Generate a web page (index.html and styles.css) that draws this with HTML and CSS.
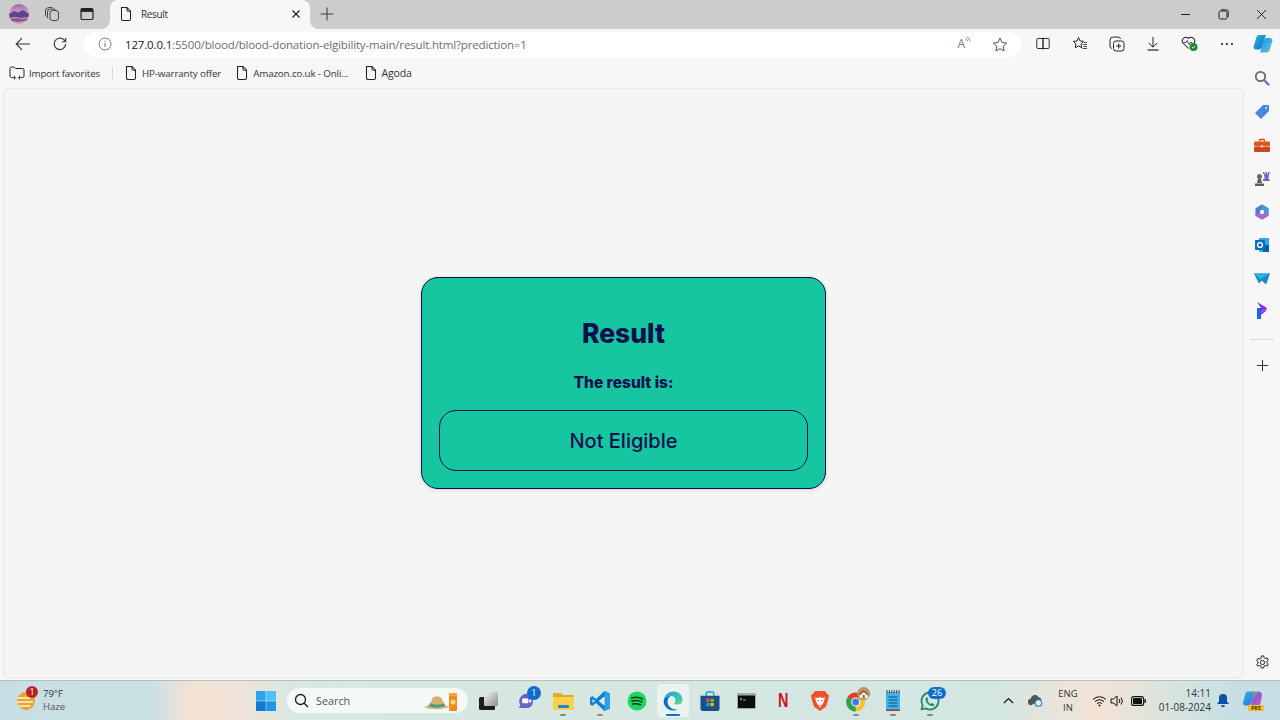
FILE: index.html
```html
<!DOCTYPE html>
<html lang="en">
<head>
<meta charset="utf-8">
<title>Result</title>
<link rel="stylesheet" href="styles.css">
</head>
<body>
<svg class="defs" width="0" height="0" aria-hidden="true">
  <symbol id="page" viewBox="0 0 14 16"><path d="M2.500 1.500h5.600L11.500 5v8a1.500 1.500 0 0 1-1.500 1.500H4A1.500 1.500 0 0 1 2.500 13z M8 1.500v2.500a1.200 1.200 0 0 0 1.200 1.200h2.300" fill="none" stroke="#222" stroke-width="1.050" stroke-linejoin="round"/></symbol>
</svg>
<div class="browser">
  <header class="tabstrip">
    <button class="ib avatar-btn"><svg width="20" height="20" viewBox="0 0 20 20"><defs><linearGradient id="av" x1="0" y1="0" x2="0" y2="1"><stop offset="0" stop-color="#8b72b8"/><stop offset=".35" stop-color="#d08fc0"/><stop offset=".5" stop-color="#e8a2b0"/><stop offset="1" stop-color="#e98aa0"/></linearGradient><clipPath id="avc"><circle cx="10" cy="10" r="10"/></clipPath></defs><g clip-path="url(#avc)"><rect width="20" height="20" fill="url(#av)"/><path d="M0 10l5-3 4 1.500L14 6l6 4v3l-8 1-6-1-6 1z" fill="#5c4590"/><path d="M0 15l7-1 6 1 7-1v2l-10 2-10-1z" fill="#7e5aa6"/></g></svg></button>
    <button class="ib ws"><svg width="16" height="16" viewBox="0 0 16 16" fill="none" stroke="#444" stroke-width="1"><rect x="6" y="4.500" width="8.500" height="10" rx="2.500"/><path d="M4 12.500A2 2 0 0 1 3.500 11V6a3 3 0 0 1 3-3h3.500a2 2 0 0 1 1.500.7"/><path d="M2 10.500A2 2 0 0 1 1.500 9V5a3.500 3.500 0 0 1 3.500-3.500h3.500"/></svg></button>
    <button class="ib ta"><svg width="14" height="14" viewBox="0 0 14 14"><rect x="1" y="1.500" width="12" height="11" rx="1.600" fill="none" stroke="#222" stroke-width="1.200"/><rect x="1" y="1.500" width="12" height="3.400" fill="#222"/></svg></button>
    <div class="tab">
      <svg class="tab-ico" width="14" height="16"><use href="#page"/></svg>
      <span class="tab-title">Result</span>
      <svg class="tab-x" width="10" height="10" viewBox="0 0 10 10"><path d="M1.500 1.500l7 7M8.500 1.500l-7 7" stroke="#222" stroke-width="1.200"/></svg>
    </div>
    <button class="ib newtab"><svg width="14" height="14" viewBox="0 0 14 14"><path d="M7 .5v13M.5 7h13" stroke="#444" stroke-width="1.100"/></svg></button>
    <div class="winctl">
      <button class="wb"><svg width="11" height="11" viewBox="0 0 11 11"><path d="M1 5.500h9" stroke="#222" stroke-width="1"/></svg></button>
      <button class="wb"><svg width="11" height="11" viewBox="0 0 11 11" fill="none" stroke="#222" stroke-width="1"><rect x="1" y="2" width="8" height="8" rx="1.500"/><path d="M3 .8h5.500A1.800 1.800 0 0 1 10.200 2.600V8"/></svg></button>
      <button class="wb"><svg width="11" height="11" viewBox="0 0 11 11"><path d="M1 1l9 9M10 1l-9 9" stroke="#222" stroke-width="1"/></svg></button>
    </div>
  </header>

  <nav class="toolbar">
    <button class="tb tb-back"><svg width="16" height="14" viewBox="0 0 16 14"><path d="M15 7H1.500M7 1.200L1.200 7 7 12.800" fill="none" stroke="#333" stroke-width="1.100"/></svg></button>
    <button class="tb tb-ref"><svg width="14" height="14" viewBox="0 0 14 14" fill="none" stroke="#333" stroke-width="1.100"><path d="M12.600 7A5.700 5.700 0 1 1 10.800 2.700L12.600 4.500"/><path d="M12.700 1v3.700H9"/></svg></button>
    <div class="address">
      <svg class="addr-i" width="14" height="14" viewBox="0 0 14 14"><circle cx="7" cy="7" r="6" fill="none" stroke="#777" stroke-width="1"/><path d="M7 6v4M7 3.700v1.100" stroke="#777" stroke-width="1.100"/></svg>
      <span class="url"><span class="host">127.0.0.1</span>:5500/blood/blood-donation-elgibility-main/result.html?prediction=1</span>
      <span class="read"><span class="read-a">A</span><svg width="6" height="6" viewBox="0 0 6 6"><path d="M.5 2.500a3 3 0 0 1 2 2.800M2 .8a5 5 0 0 1 3 4.400" fill="none" stroke="#777" stroke-width=".9"/></svg></span>
      <svg class="addr-s" width="16" height="15" viewBox="0 0 16 15"><path d="M8 1.200l2 4.300 4.600.6-3.400 3.200.9 4.700L8 11.700 3.900 14l.9-4.700L1.400 6.100 6 5.500z" fill="none" stroke="#555" stroke-width="1" stroke-linejoin="round"/></svg>
    </div>
    <div class="actions">
      <button class="ab"><svg width="14" height="13" viewBox="0 0 14 13" fill="none" stroke="#333" stroke-width="1"><path d="M7 1.500h5.200a1 1 0 0 1 1 1v8a1 1 0 0 1-1 1H7z"/><path d="M7 1.500H1.800a1 1 0 0 0-1 1v8a1 1 0 0 0 1 1H7M7 .5v12"/></svg></button>
      <button class="ab"><svg width="16" height="15" viewBox="0 0 16 15" fill="none" stroke="#222" stroke-width="1"><path d="M6.500 1.500l1.600 3.500 3.600.4-2.700 2.600.7 3.800-3.200-1.900-3.200 1.900.7-3.800L1.300 5.400l3.600-.4z" stroke-linejoin="round"/><path d="M11 8.500h4M11.500 10.500h3.500M10.500 12.500h4.500M12 6.500h3" stroke-width=".8"/></svg></button>
      <button class="ab"><svg width="16" height="16" viewBox="0 0 16 16" fill="none" stroke="#222" stroke-width="1"><rect x="4.500" y="5" width="10.500" height="10" rx="2.500"/><path d="M9.750 7.500v5M7.250 10h5"/><path d="M3 12.500A2.500 2.500 0 0 1 1 10V4.500a3.500 3.500 0 0 1 3.500-3.500H9a2.500 2.500 0 0 1 2.500 2"/></svg></button>
      <button class="ab"><svg width="14" height="15" viewBox="0 0 14 15" fill="none" stroke="#222" stroke-width="1"><path d="M7 1v10M2.800 7L7 11.200 11.200 7"/><path d="M1.500 14h11" stroke-width="1.200"/></svg></button>
      <button class="ab"><svg width="18" height="17" viewBox="0 0 18 17"><path d="M7.500 13.500L2 8a3.600 3.600 0 0 1 5.500-4.600A3.600 3.600 0 0 1 13 8l-1 1" fill="none" stroke="#222" stroke-width="1.050"/><path d="M2.500 7.500H5l1.200-2 2 4 1-2h2" fill="none" stroke="#222" stroke-width=".8"/><circle cx="12.500" cy="12" r="4" fill="#1a8a2e"/><path d="M10.800 12l1.200 1.200 2.200-2.400" fill="none" stroke="#fff" stroke-width=".9"/></svg></button>
      <button class="ab"><svg width="14" height="4" viewBox="0 0 14 4" fill="#222"><circle cx="2" cy="2" r="1.100"/><circle cx="7" cy="2" r="1.100"/><circle cx="12" cy="2" r="1.100"/></svg></button>
      <button class="ab"><svg width="20" height="20" viewBox="0 0 20 20"><defs><linearGradient id="cp1" x1="0" y1="0" x2="1" y2="1"><stop offset="0" stop-color="#1fb6c9"/><stop offset="1" stop-color="#1a6fd6"/></linearGradient><linearGradient id="cp2" x1="0" y1="0" x2="1" y2="1"><stop offset="0" stop-color="#1b8fe0"/><stop offset=".6" stop-color="#3fb3e8"/><stop offset="1" stop-color="#7ed36f"/></linearGradient></defs><path d="M6 1h7l-4 12c-.5 1.500-1.500 2.500-3 2.500H3a2.500 2.500 0 0 1-2.300-3.300L3.500 3A3 3 0 0 1 6 1z" fill="url(#cp1)"/><path d="M14 18.500H7l4-12c.5-1.500 1.500-2.500 3-2.500h3a2.500 2.500 0 0 1 2.300 3.300L16.500 16.500a3 3 0 0 1-2.500 2z" fill="url(#cp2)"/></svg></button>
    </div>
  </nav>

  <div class="bookmarks">
    <span class="bm"><svg width="16" height="14" viewBox="0 0 16 14" fill="none" stroke="#222" stroke-width="1"><path d="M4 11.500H2.500A1.500 1.500 0 0 1 1 10V2.500A1.500 1.500 0 0 1 2.500 1H5l1.500 1.500h7A1.500 1.500 0 0 1 15 4v6a1.500 1.500 0 0 1-1.500 1.500H12"/><path d="M5.500 9.500v4M3.800 11.800h3.400M10.500 9.500v4M8.800 11.800h3.400" stroke-width=".8"/></svg>Import favorites</span>
    <span class="bm-sep"></span>
    <span class="bm"><svg width="14" height="16"><use href="#page"/></svg>HP-warranty offer</span>
    <span class="bm bm-next"><svg width="14" height="16"><use href="#page"/></svg>Amazon.co.uk - Onli...</span>
    <span class="bm bm-next"><svg width="14" height="16"><use href="#page"/></svg>Agoda</span>
  </div>

  <div class="workarea">
    <main class="page">
      <section class="card">
        <h1 class="card-title">Result</h1>
        <p class="card-label">The result is:</p>
        <div class="card-value">Not Eligible</div>
      </section>
    </main>
    <aside class="sidebar">
      <span class="si"><svg width="16" height="16" viewBox="0 0 16 16"><circle cx="6.500" cy="6.500" r="4.700" fill="none" stroke="#666" stroke-width="1.800"/><path d="M10 10l4.500 4.500" stroke="#8a5cb8" stroke-width="2.200" stroke-linecap="round"/></svg></span>
      <span class="si"><svg width="16" height="16" viewBox="0 -1 16 16"><path d="M1 9l7.500-7.500A1.500 1.500 0 0 1 9.500 1H14a1 1 0 0 1 1 1v4.500a1.500 1.500 0 0 1-.5 1L7 15z" fill="#4a86dc"/><circle cx="12" cy="4" r="1" fill="#cfe2fb"/></svg></span>
      <span class="si"><svg width="16" height="14" viewBox="0 -.5 16 14"><path d="M5.500 3V2a1 1 0 0 1 1-1h3a1 1 0 0 1 1 1v1" fill="none" stroke="#c8491a" stroke-width="1.300"/><rect y="3" width="16" height="4.500" rx="1" fill="#e0561e"/><rect y="8" width="16" height="5.500" rx="1" fill="#c8491a"/><rect x="7" y="6.500" width="2" height="2.500" fill="#f7d5c0"/></svg></span>
      <span class="si"><svg width="16" height="15" viewBox="0 0 16 15"><rect x="9" y="1" width="1.500" height="2" fill="#7c5fc0"/><rect x="11.500" y="1" width="1.500" height="2" fill="#7c5fc0"/><rect x="14" y="1" width="1.500" height="2" fill="#7c5fc0"/><path d="M10 3h5l-.7 5H15.500v2h-6.500V8h1.700z" fill="#7c5fc0"/><circle cx="5.500" cy="5.500" r="2.500" fill="#666"/><path d="M4 8h3l1 4H3zM1 12.500h9V15H1z" fill="#5e5e5e"/></svg></span>
      <span class="si"><svg width="16" height="16" viewBox="0 0 16 16"><path d="M8 .5l6.500 3.700v7.600L8 15.500 1.500 11.800V4.200z" fill="#4a7bd8"/><path d="M8 .5l6.500 3.700v4L8 8z" fill="#39a0e0"/><path d="M1.500 10L8 8l6.500 1.500v2.300L8 15.500 1.500 11.800z" fill="#a667d0"/><circle cx="8" cy="8" r="2.200" fill="#f7f7f7"/></svg></span>
      <span class="si"><svg width="16" height="16" viewBox="0 0 16 16"><rect x="5" y="1" width="10" height="14" rx="1" fill="#28a8ea"/><rect x="9" y="8" width="6" height="7" fill="#0a5ea8"/><rect x="1" y="3" width="10" height="10" rx="1" fill="#0f6cbd"/><circle cx="6" cy="8" r="2.400" fill="none" stroke="#fff" stroke-width="1.300"/></svg></span>
      <span class="si"><svg width="16" height="13" viewBox="0 -.5 16 13"><path d="M0 1h16L12 12 7.500 8 5 11z" fill="#1488c8"/><path d="M0 1l6 6L16 1z" fill="#27b4de"/></svg></span>
      <span class="si"><svg width="12" height="20" viewBox="0 0 12 20"><path d="M1 0l10 6-6 4V6z" fill="#7b2ff2"/><path d="M5 10l6-4-1 3-5 4z" fill="#c02ce0"/><path d="M1 6l4 0v11H1z" fill="#1a66e8"/></svg></span>
      <span class="side-sep"></span>
      <span class="si si-plus"><svg width="11" height="11" viewBox="0 0 11 11"><path d="M5.500 0v11M0 5.500h11" stroke="#333" stroke-width="1"/></svg></span>
      <span class="si si-gear"><svg width="15" height="15" viewBox="0 0 16 16" fill="none" stroke="#222" stroke-width="1.050"><circle cx="8" cy="8" r="2.300"/><path d="M6.700 1h2.600l.4 2 1.300.7 1.900-.7 1.300 2.300-1.500 1.300v1.600l1.500 1.300-1.300 2.300-1.900-.7-1.300.7-.4 2H6.700l-.4-2-1.300-.7-1.900.7L1.800 10l1.500-1.300V7.300L1.800 6l1.300-2.300 1.900.7 1.300-.7z" stroke-linejoin="round"/></svg></span>
    </aside>
  </div>

  <footer class="taskbar">
    <div class="weather">
      <span class="weather-ico"><svg width="22" height="22" viewBox="0 0 22 22"><circle cx="10" cy="11" r="9" fill="#f0a030"/><path d="M2 8h12M1.500 12h15M4 16h10" stroke="#fbe3b0" stroke-width="1.800" stroke-linecap="round"/></svg><span class="badge badge-red">1</span></span>
      <span class="weather-txt"><span>79°F</span><span class="haze">Haze</span></span>
    </div>
    <span class="tk tk-win"><svg width="20" height="20" viewBox="0 0 21 21"><rect width="10.200" height="10.200" fill="#2ea6ee"/><rect x="10.800" width="10.200" height="10.200" fill="#4cc2f5"/><rect y="10.800" width="10.200" height="10.200" fill="#0f79d6"/><rect x="10.800" y="10.800" width="10.200" height="10.200" fill="#2096e6"/></svg></span>
    <div class="search">
      <svg width="15" height="15" viewBox="0 0 15 15" fill="none" stroke="#1a1a1a" stroke-width="1.300"><circle cx="6.500" cy="6.500" r="5"/><path d="M10.200 10.200L14 14"/></svg>
      <span class="search-txt">Search</span>
      <svg class="search-art" width="36" height="22" viewBox="0 0 36 22"><path d="M1 17c6-2 7-3 8-8 1-3 8-4 10 0 2 5 3 7 7 8-8 3-18 3-25 0z" fill="#d8b070"/><path d="M7 13c4 2 10 2 14 0l1 3c-5 2-11 2-16 0z" fill="#4f9d7f"/><rect x="26" y="3" width="8" height="3" fill="#f4a13a"/><rect x="26" y="6" width="8" height="15" rx="1" fill="#f28a1e"/><circle cx="30" cy="12" r="2.500" fill="#fde27a"/></svg>
    </div>
    <div class="tk-row">
      <span class="tk"><svg class="tv" width="20" height="18" viewBox="0 0 20 18"><defs><linearGradient id="tvg" x1="0" y1="0" x2="1" y2="1"><stop offset="0" stop-color="#f4f4f4"/><stop offset="1" stop-color="#8c8c8c"/></linearGradient></defs><rect x="1" y="5" width="16" height="13" rx="1.500" fill="#1c1c1c"/><rect x="6" y="0" width="14" height="14" rx="1.500" fill="url(#tvg)"/></svg></span>
      <span class="tk"><svg width="19" height="19" viewBox="0 0 20 20"><path d="M9 3a8 8 0 0 1 8 8 7 7 0 0 1-7 7H2l1.500-3A8 8 0 0 1 9 3z" fill="#6a62cf"/><rect x="5.500" y="8" width="6.500" height="5" rx="1" fill="#fff"/><path d="M12.500 10l2.500-1.500v4L12.500 11z" fill="#fff"/></svg><span class="badge badge-blue badge-tk">1</span></span>
      <span class="tk dot"><svg width="21" height="18" viewBox="0 0 21 18"><path d="M0 2a1 1 0 0 1 1-1h7l2 2h10a1 1 0 0 1 1 1v2H0z" fill="#e3a92a"/><path d="M0 5h21v12a1 1 0 0 1-1 1H1a1 1 0 0 1-1-1z" fill="#fbd14b"/><rect x="5" y="13" width="11" height="3" rx="1" fill="#1a86d8"/></svg></span>
      <span class="tk dot"><svg width="20" height="20" viewBox="0 0 20 20"><path d="M14.500 0L20 2.500v15L14.500 20 6 12l-3.500 2.800L0 13.500v-7L2.500 5.200 6 8z" fill="#0f7fd0"/><path d="M14.500 5.500L9 10l5.500 4.500z" fill="#e8f3fb"/><path d="M14.500 0L20 2.500v15L14.500 20z" fill="#2aa2ec"/><path d="M14.500 5.500L9 10l5.500 4.500z" fill="#dcebf0"/><path d="M2.500 8l2.500 2-2.500 2z" fill="#dcebf0"/></svg></span>
      <span class="tk"><svg width="20" height="20" viewBox="0 0 20 20"><circle cx="10" cy="10" r="9.500" fill="#1ed760"/><path d="M4.500 7c3.500-1 8-.8 11 1M5 10c3-.8 7-.6 9.800 1M5.600 13c2.500-.6 5.500-.4 8 .8" fill="none" stroke="#143a20" stroke-width="1.500" stroke-linecap="round"/></svg></span>
      <span class="tk tk-edge"><svg width="20" height="20" viewBox="0 0 20 20"><defs><linearGradient id="e1" x1="0" y1="0" x2="1" y2="1"><stop offset="0" stop-color="#1f9fd8"/><stop offset=".6" stop-color="#35c6b8"/><stop offset="1" stop-color="#6fd86e"/></linearGradient></defs><path d="M.7 9.500C1.300 4 5.500.5 10.500.5c5 0 9 3.500 9 8.500 0 3-2.500 4.500-5 4.500-1.700 0-3-.5-3.500-1 1-.5 1.500-1.500 1.500-2.500C12.500 6.500 10.500 5 8 5 4.500 5 1.300 6.500.7 9.500z" fill="url(#e1)"/><path d="M.7 9.500C1.300 6.700 4.500 5 8 5c-2 .8-3.500 3-3.500 5.500 0 4.500 4 8 8.500 8 .8 0 1.500 0 2-.3A10 10 0 0 1 10 19.500C5 19.500.2 15 .7 9.500z" fill="#0c6cc4"/></svg><span class="edge-bar"></span></span>
      <span class="tk"><svg width="20" height="20" viewBox="0 0 20 21"><path d="M6 5V3a2 2 0 0 1 2-2h4a2 2 0 0 1 2 2v2" fill="none" stroke="#2496d8" stroke-width="1.500"/><path d="M0 5h20v13a3 3 0 0 1-3 3H3a3 3 0 0 1-3-3z" fill="#1a4f8a"/><rect x="6" y="8" width="3.500" height="3.500" fill="#f25022"/><rect x="10.500" y="8" width="3.500" height="3.500" fill="#7fba00"/><rect x="6" y="12.500" width="3.500" height="3.500" fill="#00a4ef"/><rect x="10.500" y="12.500" width="3.500" height="3.500" fill="#ffb900"/></svg></span>
      <span class="tk"><svg width="19" height="16" viewBox="0 0 19 16"><rect width="19" height="16" fill="#a6abab"/><rect x="1" y="2.500" width="17" height="12.500" fill="#0c0c0c"/><path d="M3 5l2 1-2 1M6 7h3" stroke="#ddd" stroke-width=".7" fill="none"/></svg></span>
      <span class="tk"><span class="nflx">N</span></span>
      <span class="tk"><svg width="18" height="20" viewBox="0 0 18 20"><path d="M4 0h10l2 2.500 2 2-1 5-2 6L9 20l-6-4.500-2-6-1-5 2-2z" fill="#f0502a"/><path d="M4 6.500l3 .5 2-1 2 1 3-.5-1.500 5-1.500 2.500H7l-1.500-2.500z" fill="#fff"/><path d="M6.500 9.500l1.500.3M11.500 9.500l-1.500.3" stroke="#f0502a" stroke-width="1"/><path d="M7.500 14.500h3L9 17z" fill="#fff"/></svg></span>
      <span class="tk dot"><svg width="28" height="28" viewBox="0 0 28 28"><path d="M12.700 15L4.470 10.250A9.500 9.500 0 0 1 20.930 10.250z" fill="#e33b2e"/><path d="M12.700 15L20.930 10.250A9.500 9.500 0 0 1 12.700 24.500z" fill="#fbc02d"/><path d="M12.700 15V24.500A9.500 9.500 0 0 1 4.470 10.250z" fill="#2aa14a"/><circle cx="12.700" cy="15" r="4.500" fill="#fff"/><circle cx="12.700" cy="15" r="3.500" fill="#3b7de8"/><circle cx="20.700" cy="6.500" r="6.500" fill="#b89468"/><path d="M16.500 8l4.200-4 4.200 4v3h-8.400z" fill="#fff3dc"/><path d="M16.500 8l4.200-4 4.200 4" fill="none" stroke="#b3452c" stroke-width="1.300"/><rect x="19.700" y="8" width="2" height="3" fill="#3f8a4a"/></svg></span>
      <span class="tk dot"><svg width="14" height="21" viewBox="0 0 14 21"><rect y="2" width="14" height="18" rx="1" fill="#3db4e6"/><path d="M1 0v3M3.400 0v3M5.800 0v3M8.200 0v3M10.600 0v3M13 0v3" stroke="#333" stroke-width=".9"/><path d="M2.500 7h9M2.500 10h9M2.500 13h9M2.500 16h9" stroke="#0f4f80" stroke-width="1"/><rect y="19.500" width="14" height="1.500" fill="#a33"/></svg></span>
      <span class="tk dot"><svg width="20" height="20" viewBox="0 0 20 20"><path d="M10 1.500a8.500 8.500 0 0 0-7.300 12.800L1.500 18.500l4.300-1.100A8.500 8.500 0 1 0 10 1.500z" fill="none" stroke="#1f8a68" stroke-width="1.800" stroke-linejoin="round"/><path d="M7 6l1.400 2.600-1 1.200c.8 1.500 2 2.600 3.400 3.300l1.200-1 2.500 1.300c-.5 1.500-2 2-3.200 1.600C8.500 14.300 6 11.800 5.500 9 5.300 7.500 6 6.500 7 6z" fill="#1f8a68"/></svg><span class="badge badge-blue badge-wide">26</span></span>
    </div>
    <div class="tray">
      <span class="tr tr-chev"><svg width="11" height="7" viewBox="0 0 11 7"><path d="M1 6l4.500-4.500L10 6" fill="none" stroke="#111" stroke-width="1.200"/></svg></span>
      <span class="tr tr-cloud"><svg width="15" height="13" viewBox="0 0 15 13"><path d="M3.500 11A3 3 0 0 1 3 5a4 4 0 0 1 7.500-1.500A3 3 0 0 1 13 6" fill="#555" stroke="#555"/><circle cx="10.500" cy="9" r="3.300" fill="#dff0f5" stroke="#1f7fd0" stroke-width="1.100"/></svg></span>
      <span class="lang"><span>ENG</span><span>IN</span></span>
      <span class="tr tr-wifi"><svg width="15" height="12" viewBox="0 0 15 12" fill="none" stroke="#111" stroke-width="1"><path d="M1 4.500a9 9 0 0 1 13 0M3 6.700a6.200 6.200 0 0 1 9 0M5 8.800a3.300 3.300 0 0 1 5 0"/><circle cx="7.500" cy="10.500" r=".6" fill="#111"/></svg></span>
      <span class="tr"><svg width="14" height="12" viewBox="0 0 14 12" fill="none" stroke="#111" stroke-width="1"><path d="M1 4h2.500L7 1v10L3.500 8H1z" stroke-linejoin="round"/><path d="M9 4a3 3 0 0 1 0 4M11 2.500a5.500 5.500 0 0 1 0 7"/></svg></span>
      <span class="tr tr-bat"><svg width="15" height="10" viewBox="0 0 15 10"><rect x=".6" y=".6" width="12" height="8.800" rx="2" fill="none" stroke="#111" stroke-width="1.100"/><rect x="2" y="2" width="9" height="6" rx=".8" fill="#111"/><rect x="13.400" y="3.200" width="1.500" height="3.600" fill="#111"/></svg></span>
      <span class="clock"><span>14:11</span><span>01-08-2024</span></span>
      <span class="tr tr-bell"><svg width="12" height="14" viewBox="0 0 12 14" fill="#0f4fa8"><path d="M6 0a4 4 0 0 1 4 4v3.500l2 2.500H0l2-2.500V4a4 4 0 0 1 4-4z"/><path d="M4 11.200h4a2 2 0 0 1-4 0z"/></svg></span>
      <span class="tr-copilot"><svg width="22" height="22" viewBox="0 0 22 22"><defs><linearGradient id="cq" x1="0" y1="0" x2="1" y2="1"><stop offset="0" stop-color="#2bb6d8"/><stop offset=".55" stop-color="#2f8fe0"/><stop offset="1" stop-color="#3060d8"/></linearGradient><linearGradient id="cq2" x1="0" y1="0" x2="1" y2="1"><stop offset="0" stop-color="#7fc95a"/><stop offset=".45" stop-color="#8a5ad6"/><stop offset="1" stop-color="#e85aa0"/></linearGradient></defs><path d="M6 1.500h7L9 13c-.5 1.500-1.500 2.500-3 2.500H3A2.300 2.300 0 0 1 1 12.500L3.500 3.500A3 3 0 0 1 6 1.500z" fill="url(#cq)"/><path d="M11 1.500h5.500A3.500 3.500 0 0 1 20 5.500l-1.500 8a3 3 0 0 1-3 2H9z" fill="url(#cq2)"/></svg><span class="pre-tag">PRE</span></span>
    </div>
  </footer>
</div>
</body>
</html>
```
FILE: styles.css
```css
* { box-sizing: border-box; }
html, body { margin: 0; padding: 0; height: 100%; overflow: hidden; }
body { font-family: "Open Sans", "Liberation Sans", sans-serif; color: #222; }
button { border: 0; background: none; padding: 0; font: inherit; display: flex; align-items: center; justify-content: center; }
.defs { position: absolute; }
.browser { width: 1280px; height: 720px; display: flex; flex-direction: column; background: #f7f7f7; }

/* tab strip */
.tabstrip { height: 29px; background: #cccccc; display: flex; align-items: stretch; padding-left: 5px; flex: none; }
.ib { width: 28px; flex: none; padding-bottom: 1px; }
.ws { margin-left: 5px; }
.ta { margin-left: 7px; }
.tab { width: 200px; margin-left: 9px; background: #f7f7f7; border-radius: 8px 8px 0 0; display: flex; align-items: center; padding: 0 9px 1px; position: relative; }
.tab::before, .tab::after { content: ""; position: absolute; bottom: 0; width: 8px; height: 8px; }
.tab::before { left: -8px; background: radial-gradient(circle at 0 0, transparent 7.500px, #f7f7f7 8px); }
.tab::after { right: -8px; background: radial-gradient(circle at 100% 0, transparent 7.500px, #f7f7f7 8px); }
.tab-title { font-size: 10px; margin-left: 8px; flex: 1; letter-spacing: -.35px; color: #333; }
.newtab { margin-left: 3px; }
.winctl { margin-left: auto; display: flex; }
.wb { width: 38px; padding-bottom: 1px; }

/* toolbar */
.toolbar { height: 31px; display: flex; align-items: center; padding-left: 5px; flex: none; }
.tb { width: 36px; height: 28px; flex: none; padding-bottom: 2px; }
.tb-ref { margin-left: 1px; }
.address { flex: 1; margin: 0 4px 0 6px; height: 25px; background: #fff; border-radius: 13px; display: flex; align-items: center; padding: 0 0 1px 14px; }
.url { font-size: 11.500px; color: #6d6d6d; margin-left: 13px; flex: 1; letter-spacing: -.16px; white-space: nowrap; }
.host { color: #1a1a1a; }
.read { display: flex; align-items: flex-start; width: 16px; margin-right: 18px; }
.read-a { font-size: 12px; line-height: 16px; color: #777; }
.addr-s { margin-right: 13px; }
.actions { display: flex; flex: none; }
.ab { width: 36.800px; height: 28px; padding-bottom: 2px; }
.ab:last-child { width: 34.700px; }

/* bookmarks */
.bookmarks { height: 28px; display: flex; align-items: center; padding: 0 0 2px 9px; flex: none; font-size: 9.800px; color: #333; letter-spacing: -.15px; }
.bm { display: flex; align-items: center; white-space: nowrap; }
.bm svg { margin-right: 4px; }
.bm-sep { width: 1px; height: 14px; background: #dcdcdc; margin: 0 11px 0 12px; }
.bm-next { margin-left: 14px; }
.bm-next:last-child { margin-left: 15px; font-size: 10.500px; }

/* page */
.workarea { flex: 1; display: flex; min-height: 0; padding-bottom: 2px; }
.page { flex: 1; margin-left: 3px; background: #f5f5f5; border: 1px solid #e9e9e9; border-radius: 6px; display: flex; align-items: center; justify-content: center; box-shadow: 0 0 2px rgba(0,0,0,.04); }
.card { width: 405px; height: 212px; background: #15c6a1; border: 1.500px solid #0a1145; border-radius: 17px; padding: 37px 17px 17px; display: flex; flex-direction: column; align-items: center; box-shadow: 0 1px 4px rgba(40,40,90,.15); font-family: Inter, "Open Sans", sans-serif; color: #0b0f4c; }
.card-title { margin: 0; font-size: 26.500px; line-height: 36px; font-weight: 800; text-align: center; }
.card-label { margin: 20px 0 0; font-size: 15.500px; line-height: 24px; font-weight: 800; text-align: center; }
.card-value { margin-top: 15px; width: 369px; height: 61px; border: 1.500px solid #0a1145; border-radius: 17px; display: flex; align-items: center; justify-content: center; font-size: 20px; font-weight: 500; flex: none; }

/* sidebar */
.sidebar { width: 36px; flex: none; display: flex; flex-direction: column; align-items: center; }
.si { height: 33.500px; width: 36px; display: flex; align-items: center; justify-content: center; flex: none; }
.sidebar .si:first-child { margin-top: -27px; }
.side-sep { width: 24px; height: 1px; background: #dedede; margin: 10px 0 9px; flex: none; }
.si-plus { height: 33px; }
.si-gear { margin-top: auto; height: 34px; margin-bottom: -1px; }

/* taskbar */
.taskbar { height: 40px; flex: none; display: flex; align-items: center; border-top: 1px solid #b4bfc0; background: linear-gradient(90deg, #c7dfe4 0, #c9e0e3 150px, #f3e2d6 190px, #f1e3d8 235px, #d8e8e2 300px, #d3e6e2 1000px, #e9e5da 1060px, #f3e2d6 1100px, #d8e5de 1170px, #c7dfe4 1230px); font-family: "Open Sans", sans-serif; }
.weather { width: 247px; flex: none; display: flex; align-items: center; padding-left: 16px; font-size: 9.500px; line-height: 13px; color: #333; }
.weather-ico { position: relative; width: 22px; height: 22px; display: block; }
.weather-txt { margin: -2px 0 0 5px; display: flex; flex-direction: column; }
.haze { color: #555; }
.badge { position: absolute; display: flex; align-items: center; justify-content: center; border-radius: 50%; color: #fff; font-size: 9px; line-height: 1; }
.badge-red { width: 12px; height: 12px; background: #c01f1f; left: 10px; top: -4px; }
.badge-blue { background: #0f6cc8; }
.badge-tk { width: 14px; height: 14px; right: 4px; top: 3px; }
.badge-wide { width: 18px; height: 12px; border-radius: 6px; right: 2.500px; top: 4px; }
.tk { width: 36.700px; height: 36px; flex: none; display: flex; align-items: center; justify-content: center; position: relative; }
.tk-win { width: 37px; }
.tk-row { display: flex; margin-left: 3.500px; }
.tv { margin-left: -4px; }
.dot::after { content: ""; position: absolute; left: 15px; bottom: 3px; width: 6px; height: 2px; border-radius: 1px; background: #808a8a; }
.tk-edge::before { content: ""; position: absolute; left: 2px; right: 2.700px; top: 1.500px; bottom: 2px; background: rgba(255,255,255,.5); border-radius: 4px; }
.tk-edge svg { position: relative; }
.edge-bar { position: absolute; left: 11px; bottom: 2.500px; width: 14px; height: 2.500px; border-radius: 2px; background: #0f6cc8; }
.nflx { font: 700 20px "Liberation Sans", sans-serif; color: #d01020; transform: scaleX(.72); }
.search { width: 181px; height: 25px; margin-left: 3px; flex: none; display: flex; align-items: center; padding: 0 9px 0 7px; background: rgba(255,255,255,.72); border-radius: 13px; }
.search-txt { font-size: 10.800px; color: #555; margin-left: 7px; flex: 1; }

/* tray */
.tray { margin-left: auto; display: flex; align-items: center; padding-right: 16px; }
.tr { width: 18px; flex: none; display: flex; align-items: center; justify-content: center; }
.tr-cloud { margin-left: 9px; }
.lang { width: 28px; margin-left: 10px; display: flex; flex-direction: column; align-items: center; font-size: 9.500px; line-height: 14px; color: #333; }
.tr-wifi { margin-left: 8px; }
.tr-bat { margin-left: 3px; }
.clock { width: 54px; margin: -2px 0 0 10px; display: flex; flex-direction: column; align-items: flex-end; font-size: 10px; line-height: 14px; color: #333; white-space: nowrap; }
.tr-bell { margin-left: 3px; }
.tr-copilot { width: 22px; height: 22px; margin-left: 10px; display: block; position: relative; }
.pre-tag { position: absolute; left: 6px; top: 15.500px; width: 16px; height: 6px; border-radius: 1px; background: #f5c02e; color: #4a3600; font-size: 5.500px; font-weight: 700; line-height: 6px; text-align: center; }
```
